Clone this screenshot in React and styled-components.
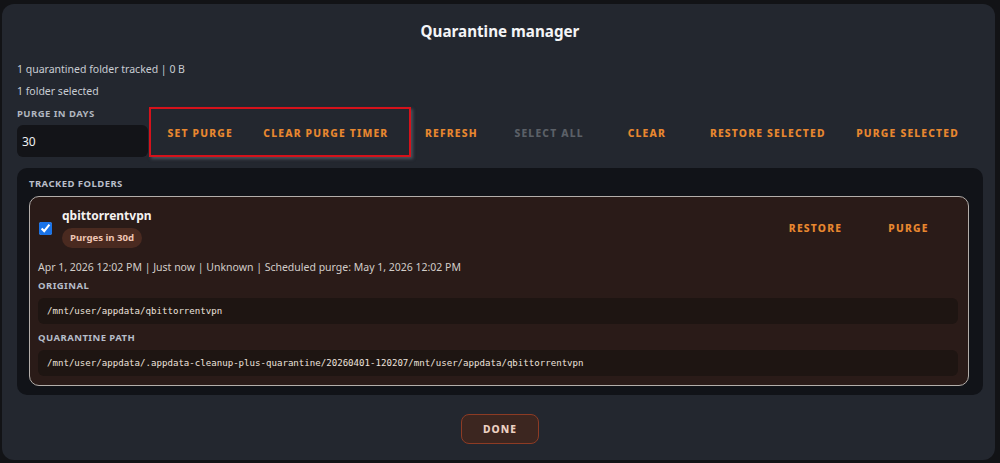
import React from 'react'
import styled, { createGlobalStyle } from 'styled-components'

const GlobalStyle = createGlobalStyle`
  html, body {
    margin: 0;
    background: #121316;
  }
  body {
    font-family: "Noto Sans", "Open Sans", sans-serif;
    -webkit-font-smoothing: antialiased;
  }
  * { box-sizing: border-box; }
`

const Page = styled.div`
  height: 463px;
  padding: 4px 5px 3px 2px;
`

const Modal = styled.div`
  height: 100%;
  background: #23272f;
  border-radius: 12px;
  padding: 17px 12px 15px 15px;
  display: flex;
  flex-direction: column;
`

const Title = styled.h2`
  margin: 0 0 20px;
  text-align: center;
  font-size: 15.2px;
  line-height: 20px;
  font-weight: 700;
  color: #f4f5f7;
`

const Stat = styled.div`
  font-size: 10.5px;
  line-height: 16px;
  color: #c9cdd3;
  margin-bottom: 6px;
`

const Controls = styled.div`
  display: flex;
  align-items: center;
  gap: 8.5px;
  margin-top: 3px;
`

const Field = styled.label`
  display: flex;
  flex-direction: column;
  gap: 5px;
  width: 131px;
`

const Label = styled.span`
  font-size: 9.5px;
  line-height: 12px;
  font-weight: 700;
  letter-spacing: 0.45px;
  text-transform: uppercase;
  color: ${p => p.$tone || '#b0b6bf'};
`

const DaysInput = styled.input`
  height: 32px;
  width: 100%;
  border: none;
  outline: none;
  border-radius: 6px;
  background: #131418;
  color: #eef0f3;
  font-family: inherit;
  font-size: 12px;
  padding: 0 5px;
`

const Group = styled.div`
  position: relative;
  display: flex;
  gap: 8.5px;

  /* red outline drawn over the purge-timer pair */
  &::after {
    content: '';
    position: absolute;
    top: -9px;
    left: -8px;
    right: -12px;
    bottom: -7px;
    border: 2px solid #d5121b;
    box-shadow: 2px 2px 3px rgba(110, 115, 125, 0.55);
    pointer-events: none;
  }
`

const TextButton = styled.button`
  height: 34px;
  min-width: 87px;
  padding: 0 11px;
  border: none;
  background: transparent;
  font-family: "Noto Sans", sans-serif;
  font-size: 10.3px;
  font-weight: 800;
  letter-spacing: 1.2px;
  text-transform: uppercase;
  white-space: nowrap;
  color: ${p => (p.disabled ? '#5b6067' : '#e8872f')};
  cursor: ${p => (p.disabled ? 'default' : 'pointer')};
`

const Panel = styled.section`
  margin-top: 11px;
  background: #111318;
  border-radius: 10px;
  padding: 10px 14px 9px 12px;
  display: flex;
  flex-direction: column;
  gap: 6px;
`

const Card = styled.div`
  background: #2a1b18;
  border: 1.5px solid #b3aeaa;
  border-radius: 10px;
  padding: 11px 10px 9px 8px;
`

const CardHead = styled.div`
  display: flex;
  align-items: center;
`

const Check = styled.input`
  width: 13px;
  height: 13px;
  margin: 0 10px 0 1px;
  accent-color: #1a73e8;
`

const NameCol = styled.div`
  display: flex;
  flex-direction: column;
  align-items: flex-start;
  gap: 4px;
`

const Name = styled.div`
  font-size: 12px;
  line-height: 16px;
  font-weight: 700;
  color: #f5f2f0;
`

const Pill = styled.span`
  background: #4a2a20;
  color: #f0c6b4;
  border-radius: 10px;
  padding: 0 8px;
  height: 20px;
  line-height: 20px;
  font-size: 9.6px;
  font-weight: 700;
`

const CardActions = styled.div`
  margin-left: auto;
  margin-right: 6px;
  display: flex;
  gap: 6px;
`

const Meta = styled.div`
  margin-top: 11px;
  font-size: 10.5px;
  line-height: 16px;
  color: #d2cdc9;
`

const Section = styled.div`
  margin-top: ${p => p.$top}px;
  display: flex;
  flex-direction: column;
  gap: 6px;
`

const PathBox = styled.div`
  height: 26px;
  display: flex;
  align-items: center;
  padding: 0 9px;
  border-radius: 6px;
  background: #1e1512;
  font-family: "DejaVu Sans Mono", "Liberation Mono", monospace;
  font-size: 9.1px;
  color: #ede3dd;
`

const Footer = styled.div`
  display: flex;
  justify-content: center;
  margin-top: 19px;
`

const DoneButton = styled.button`
  width: 78px;
  height: 30px;
  border-radius: 8px;
  border: 1.5px solid #8d3b24;
  background: #3c2620;
  color: #ecd0c2;
  font-family: "Noto Sans", sans-serif;
  font-size: 10.3px;
  font-weight: 800;
  letter-spacing: 1px;
`

const toolbar = [
  { label: 'Refresh' },
  { label: 'Select all', disabled: true },
  { label: 'Clear' },
  { label: 'Restore selected' },
  { label: 'Purge selected' },
]

const folder = {
  name: 'qbittorrentvpn',
  badge: 'Purges in 30d',
  meta: 'Apr 1, 2026 12:02 PM | Just now | Unknown | Scheduled purge: May 1, 2026 12:02 PM',
  original: '/mnt/user/appdata/qbittorrentvpn',
  quarantine:
    '/mnt/user/appdata/.appdata-cleanup-plus-quarantine/20260401-120207/mnt/user/appdata/qbittorrentvpn',
}

export default function App() {
  return (
    <>
      <GlobalStyle />
      <Page>
        <Modal>
          <Title>Quarantine manager</Title>
          <Stat>1 quarantined folder tracked | 0 B</Stat>
          <Stat>1 folder selected</Stat>

          <Controls>
            <Field>
              <Label>Purge in days</Label>
              <DaysInput defaultValue="30" />
            </Field>
            <Group>
              <TextButton>Set purge</TextButton>
              <TextButton>Clear purge timer</TextButton>
            </Group>
            {toolbar.map(b => (
              <TextButton key={b.label} disabled={b.disabled}>
                {b.label}
              </TextButton>
            ))}
          </Controls>

          <Panel>
            <Label $tone="#b8bec8">Tracked folders</Label>
            <Card>
              <CardHead>
                <Check type="checkbox" checked readOnly />
                <NameCol>
                  <Name>{folder.name}</Name>
                  <Pill>{folder.badge}</Pill>
                </NameCol>
                <CardActions>
                  <TextButton>Restore</TextButton>
                  <TextButton>Purge</TextButton>
                </CardActions>
              </CardHead>
              <Meta>{folder.meta}</Meta>
              <Section $top={5}>
                <Label $tone="#b6bdc9">Original</Label>
                <PathBox>{folder.original}</PathBox>
              </Section>
              <Section $top={8}>
                <Label $tone="#b6bdc9">Quarantine path</Label>
                <PathBox>{folder.quarantine}</PathBox>
              </Section>
            </Card>
          </Panel>

          <Footer>
            <DoneButton>DONE</DoneButton>
          </Footer>
        </Modal>
      </Page>
    </>
  )
}
